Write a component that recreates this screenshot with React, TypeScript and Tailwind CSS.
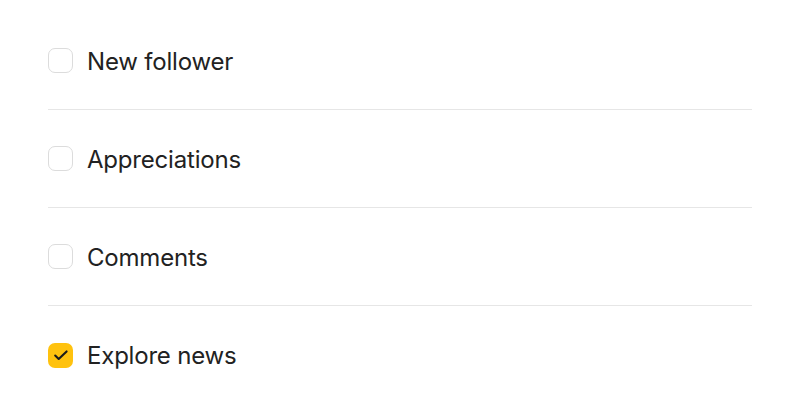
import React from "react";

const items = [
  { label: "New follower", checked: false },
  { label: "Appreciations", checked: false },
  { label: "Comments", checked: false },
  { label: "Explore news", checked: true },
];

export default function App() {
  return (
    <div className="w-[800px] h-[415px] bg-white pt-[12px] px-[48px]" style={{ fontFamily: "Inter, 'Noto Sans', sans-serif" }}>
      {items.map((it, i) => (
        <div
          key={it.label}
          className={`flex items-center gap-[14px] h-[98px] ${i < items.length - 1 ? "border-b border-[#e6e6e6]" : ""}`}
        >
          {it.checked ? (
            <div className="w-[25px] h-[25px] rounded-[7px] bg-[#ffc20e] flex items-center justify-center">
              <svg width="25" height="25" viewBox="0 0 25 25" fill="none">
                <path d="M7.2 12.6 L10.7 16 L18.6 8.4" stroke="#1a1a1a" strokeWidth="2.1" strokeLinecap="round" strokeLinejoin="round" />
              </svg>
            </div>
          ) : (
            <div className="w-[25px] h-[25px] rounded-[7px] border border-[#dcdcdc] bg-white" />
          )}
          <span className="text-[24px] text-[#222222] tracking-[-0.2px] pt-[2px]">{it.label}</span>
        </div>
      ))}
    </div>
  );
}
